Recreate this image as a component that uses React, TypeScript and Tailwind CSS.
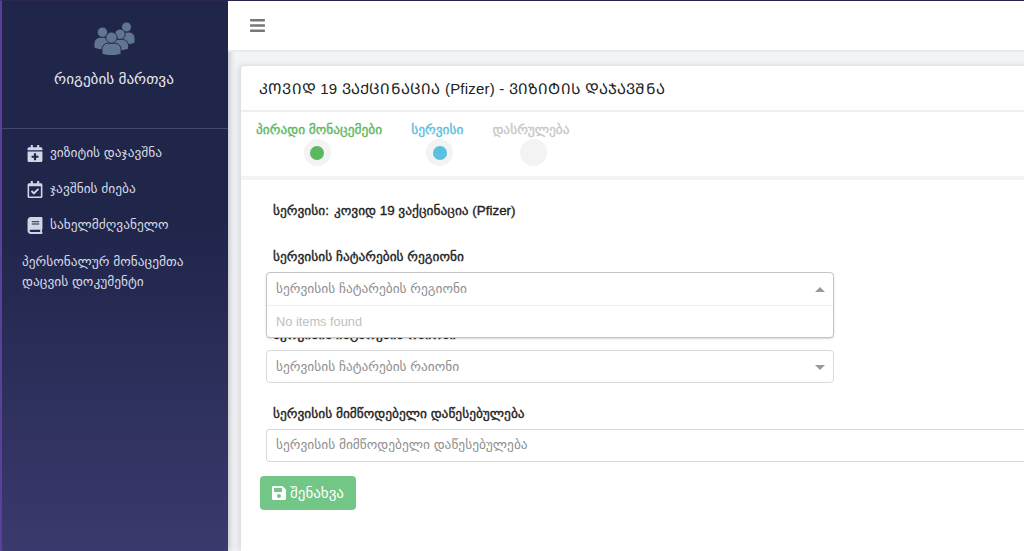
import { FaBars, FaBook, FaCalendarPlus, FaRegCalendarCheck, FaSave } from "react-icons/fa";

const font = "font-['Liberation_Sans','DejaVu_Sans',sans-serif]";
const label = "text-[13.4px] leading-[17px] text-[#222] [-webkit-text-stroke:0.35px_#222]";

function GroupIcon() {
  const person = (cx: number, top: number, r: number, w: number, bottom: number) => (
    <g fill="#607690" stroke="#22264a" strokeWidth="0.9">
      <path
        d={`M${cx - w} ${bottom} V${top + r * 2 + 6} a6 6 0 0 1 6 -6 h${2 * w - 12} a6 6 0 0 1 6 6 V${bottom} q-${w} 3.5 -${2 * w} 0z`}
      />
      <circle cx={cx} cy={top + r} r={r} />
    </g>
  );
  return (
    <svg width="42" height="34" viewBox="0 0 42 34" aria-hidden="true" className="ml-[2px]">
      {person(32.5, 1, 5, 8.5, 22)}
      {person(8.5, 6, 5.2, 8.5, 27)}
      {person(26, 8, 5.2, 8.5, 28)}
      {person(17.5, 11, 5.6, 9.5, 33)}
    </svg>
  );
}

function Arrow({ up }: { up?: boolean }) {
  return up ? (
    <span className="-mr-[1px] h-0 w-0 border-x-[5px] border-b-[5px] border-x-transparent border-b-[#999]" />
  ) : (
    <span className="-mr-[1px] h-0 w-0 border-x-[5px] border-t-[5px] border-x-transparent border-t-[#999]" />
  );
}

function Nav({ icon, text }: { icon: React.ReactNode; text: string }) {
  return (
    <div className="flex h-9 items-center gap-[7px] pl-[25px] text-[13.4px] text-[#d5d9e6]">
      <span className="flex w-4 justify-center text-[17px] text-[#cfd6e6]">{icon}</span>
      <span>{text}</span>
    </div>
  );
}

function Step({ text, color, dot, offset }: { text: string; color: string; dot?: string; offset: string }) {
  return (
    <div className="flex flex-col items-center">
      <div className={`whitespace-nowrap text-[13.4px] leading-[17px] [-webkit-text-stroke:0.35px] ${color}`}>{text}</div>
      <div className={`mt-[1px] flex h-[27px] w-[27px] items-center justify-center rounded-full bg-[#f3f3f3] ${offset}`}>
        {dot && <span className={`h-[14px] w-[14px] rounded-full ${dot}`} />}
      </div>
    </div>
  );
}

export default function App() {
  return (
    <div className={`flex h-[551px] w-[1024px] overflow-hidden bg-[#f3f4f8] ${font}`}>
      <aside className="h-full w-[228px] shrink-0 border-l-2 border-t border-l-[#5b3f99] border-t-[#2a2650] bg-gradient-to-b from-[#20254a] from-40% to-[#3a3a6e] shadow-[2px_0_6px_rgba(0,0,0,0.2)]">
        <div className="flex h-[128px] flex-col items-center border-b border-[#44486a] pr-[2px] pt-[20px]">
          <GroupIcon />
          <div className="mt-[13px] text-[15.2px] text-[#e6e8f0]">რიგების მართვა</div>
        </div>
        <div className="pt-[6px]">
          <Nav icon={<FaCalendarPlus />} text="ვიზიტის დაჯავშნა" />
          <Nav icon={<FaRegCalendarCheck />} text="ჯავშნის ძიება" />
          <Nav icon={<FaBook />} text="სახელმძღვანელო" />
          <div className="pl-[20px] pt-[9px] text-[13.4px] leading-[20px] text-[#d5d9e6]">
            პერსონალურ მონაცემთა
            <br />
            დაცვის დოკუმენტი
          </div>
        </div>
      </aside>

      <main className="min-w-0 flex-1">
        <header className="flex h-[52px] items-center border-b-2 border-t border-b-[#e7eaef] border-t-[#2a2650] bg-white pl-[21px] text-[17px] text-[#777]">
          <FaBars />
        </header>
        <div className="pl-[13px] pt-[13px]">
          <section className="relative h-[486px] w-[800px] rounded-tl-[4px] border-t border-[#e4e4e8] bg-white shadow-[-3px_0_6px_rgba(0,0,0,0.1)]">
            <div className="flex h-[46px] items-center border-b-2 border-[#eeeeee] pl-[18px] pt-[3px] text-[15px] tracking-[0.19px] text-[#222]">
              ᲙᲝᲕᲘᲓ 19 ᲕᲐᲥᲪᲘᲜᲐᲪᲘᲐ (Pfizer) - ᲕᲘᲖᲘᲢᲘᲡ ᲓᲐᲯᲐᲕᲨᲜᲐ
            </div>
            <div className="flex h-[68px] gap-[29px] border-b-4 border-[#f3f3f3] pl-[15px] pt-[9px]">
              <Step text="პირადი მონაცემები" color="text-[#5cb85c]" dot="bg-[#5cb85c]" offset="mr-[4px]" />
              <Step text="სერვისი" color="text-[#5bc0de]" dot="bg-[#5bc0de]" offset="ml-[5px]" />
              <Step text="დასრულება" color="text-[#c8c8c8]" offset="ml-[5px]" />
            </div>
            <div className="relative pl-[25px]">
              <div className={`flex pl-[7px] pt-[22px] ${label}`}>
                <span>სერვისი:</span>
                <span className="ml-[5px]">კოვიდ 19 ვაქცინაცია (Pfizer)</span>
              </div>
              <div className={`pl-[7px] pt-[29px] ${label}`}>სერვისის ჩატარების რეგიონი</div>
              <div className="relative z-10 mt-[7px] w-[568px] rounded-[4px] border border-[#c4c4c4] bg-white shadow-[0_1px_2px_rgba(0,0,0,0.15)]">
                <div className="flex h-[32px] items-center justify-between px-[9px] text-[13.4px] text-[#8f8f8f]">
                  <span>სერვისის ჩატარების რეგიონი</span>
                  <Arrow up />
                </div>
                <div className="flex h-[32px] items-center border-t border-[#eeeeee] px-[9px] text-[12.8px] text-[#c0c0c0]">
                  No items found
                </div>
              </div>
              <div className={`-mt-[12px] pl-[7px] ${label}`}>სერვისის ჩატარების რაიონი</div>
              <div className="mt-[7px] flex h-[33px] w-[568px] items-center justify-between rounded-[4px] border border-[#d9d9d9] bg-white px-[9px] pt-[1px] text-[13.4px] text-[#8f8f8f]">
                <span>სერვისის ჩატარების რაიონი</span>
                <Arrow />
              </div>
              <div className={`pl-[7px] pt-[22px] ${label}`}>სერვისის მიმწოდებელი დაწესებულება</div>
              <div className="mt-[7px] flex h-[33px] items-center rounded-l-[4px] border-y border-l border-[#d9d9d9] px-[9px] text-[13.4px] text-[#8f8f8f]">
                სერვისის მიმწოდებელი დაწესებულება
              </div>
              <button className="-ml-[6px] mt-[14px] flex h-[34px] w-[96px] items-center gap-[3px] rounded-[4px] bg-[#72c686] pl-[11px] text-[15px] text-white">
                <FaSave className="text-[16px]" />
                შენახვა
              </button>
            </div>
          </section>
        </div>
      </main>
    </div>
  );
}
